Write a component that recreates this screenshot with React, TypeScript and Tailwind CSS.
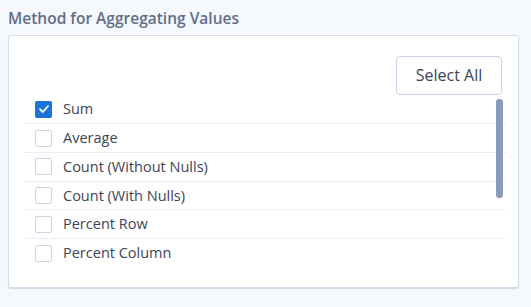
import React from "react";

const items = [
  { label: "Sum", checked: true },
  { label: "Average", checked: false },
  { label: "Count (Without Nulls)", checked: false },
  { label: "Count (With Nulls)", checked: false },
  { label: "Percent Row", checked: false },
  { label: "Percent Column", checked: false },
];

function Check({ checked }: { checked: boolean }) {
  if (checked) {
    return (
      <span className="flex h-[17px] w-[17px] shrink-0 items-center justify-center rounded-[2px] bg-[#1b74d8]">
        <svg width="12" height="12" viewBox="0 0 12 12" fill="none">
          <path d="M2 6.2 L4.8 9 L10 3.2" stroke="#fff" strokeWidth="1.8" strokeLinecap="round" strokeLinejoin="round" />
        </svg>
      </span>
    );
  }
  return <span className="block h-[17px] w-[17px] shrink-0 rounded-[2px] border-[1.5px] border-[#cdd5e5] bg-white" />;
}

export default function App() {
  return (
    <div className="h-[307px] w-[531px] bg-[#f5f8fd] pl-[8px] pr-[12px] pt-[8px]" style={{ fontFamily: '"Open Sans", "Noto Sans", sans-serif' }}>
      <div className="text-[15.5px] font-semibold leading-[21px] text-[#626e88]">Method for Aggregating Values</div>
      <div className="relative mt-[6px] h-[253px] rounded-[3px] border border-[#d5dbe8] bg-white pl-[15px] pr-[12px] pt-[20px] shadow-[0_1px_1px_rgba(180,190,210,0.5)]">
        <div className="flex justify-end pr-[4px]">
          <button className="h-[39px] w-[106px] rounded-[4px] border border-[#c9d1e4] bg-white pb-[1px] text-[16px] text-[#3d4457]">
            Select All
          </button>
        </div>
        <div className="relative mt-[0.5px]">
          {items.map((it, i) => (
            <div
              key={it.label}
              className={`flex h-[28.7px] items-center gap-[11px] pl-[11px] ${i < items.length - 1 ? "border-b border-[#e8edf5]" : ""}`}
            >
              <Check checked={it.checked} />
              <span className="text-[14.5px] text-[#3d4457]">{it.label}</span>
            </div>
          ))}
          <div className="absolute right-[3px] top-[3.5px] h-[99px] w-[7px] rounded-[3px] bg-[#8a9aba]" />
        </div>
      </div>
    </div>
  );
}
